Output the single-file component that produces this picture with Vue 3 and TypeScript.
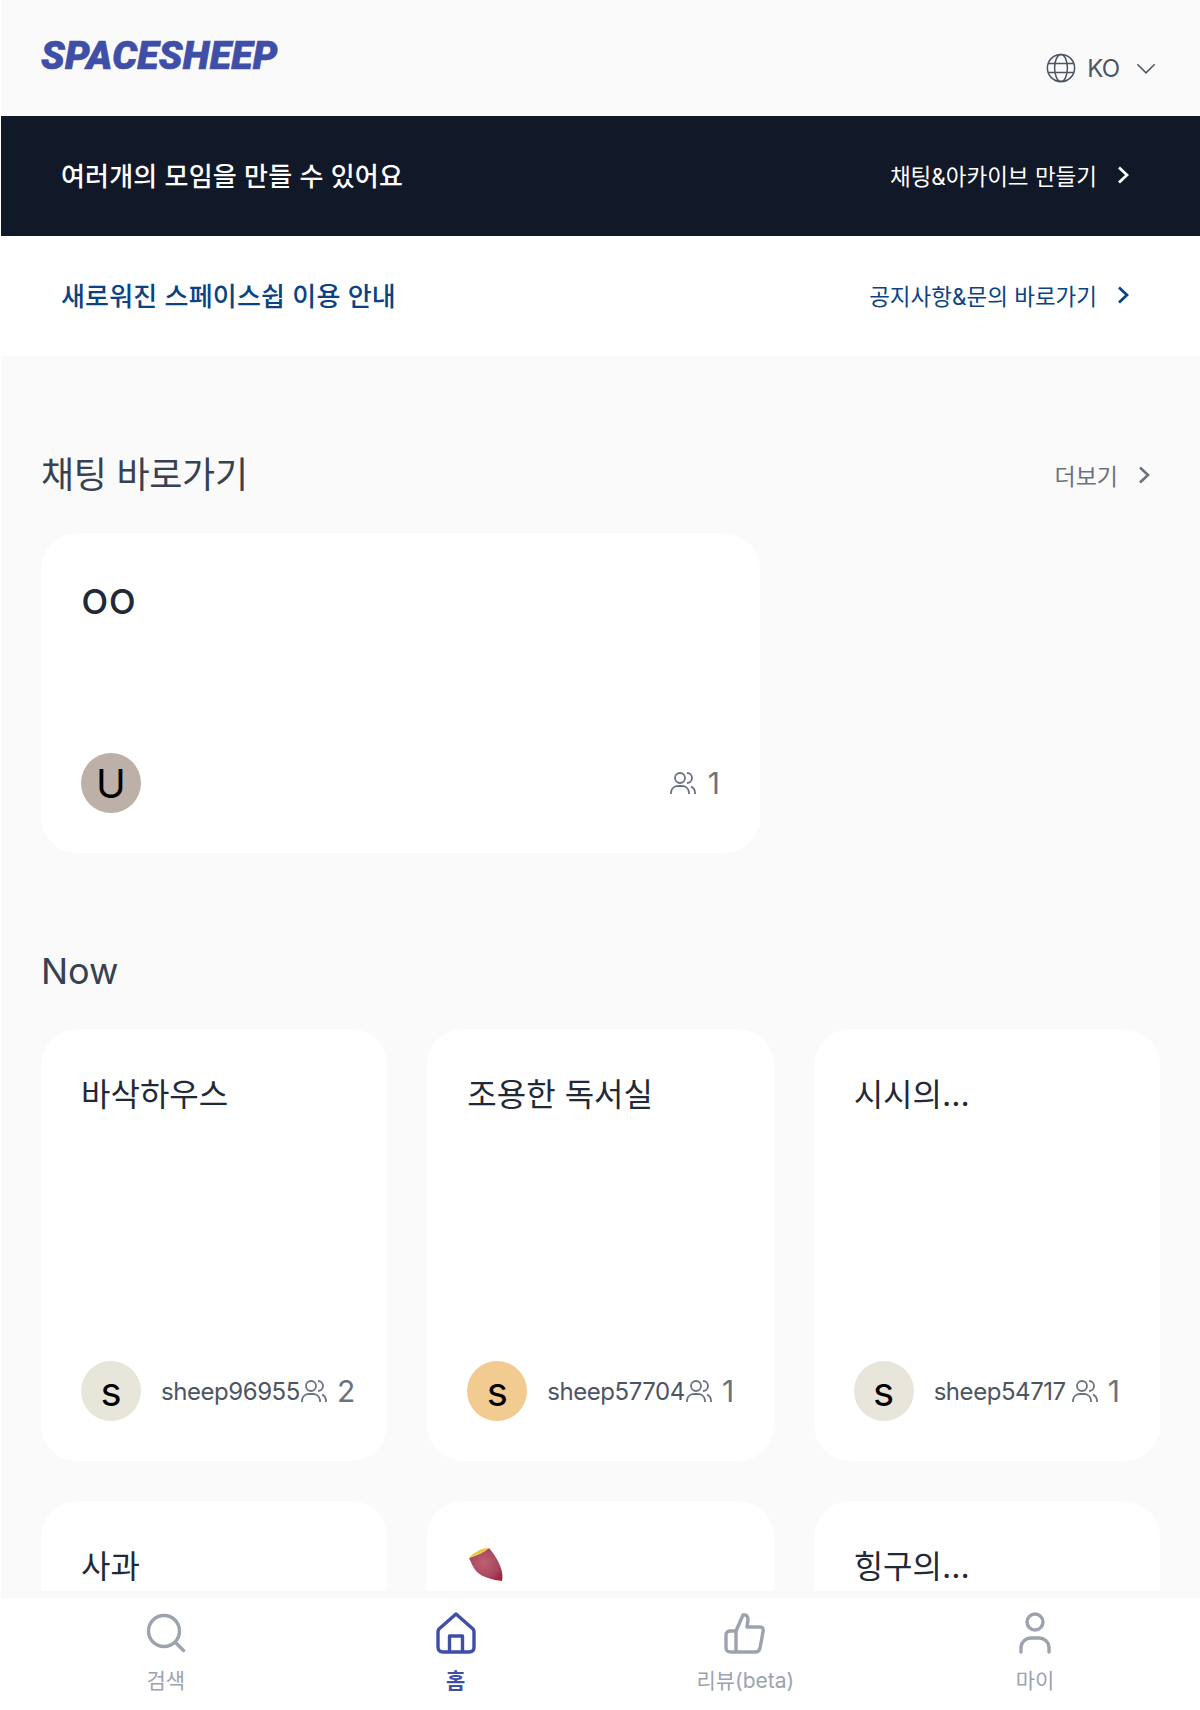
<template>
  <div class="page">
    <header class="top">
      <h1 class="logo">SPACESHEEP</h1>
      <div class="lang">
        <svg class="globe" viewBox="0 0 30 30" fill="none" stroke="#4b5563" stroke-width="1.5">
          <circle cx="15" cy="15" r="13.6" />
          <ellipse cx="15" cy="15" rx="6.4" ry="13.6" />
          <path d="M2.4 10.5h25.2M2.400 19.5h25.2" />
        </svg>
        <span class="lang-code">KO</span>
        <svg class="caret" viewBox="0 0 20 12" fill="none" stroke="#4b5563" stroke-width="1.4">
          <path d="M2 2l8 8 8-8" />
        </svg>
      </div>
    </header>

    <a class="banner dark">
      <span class="banner-title">여러개의 모임을 만들 수 있어요</span>
      <span class="banner-link">
        채팅&amp;아카이브 만들기
        <svg class="chev" viewBox="0 0 12 20" fill="none" stroke="currentColor" stroke-width="2.8">
          <path d="M2 2.500l8 7.500-8 7.500" />
        </svg>
      </span>
    </a>
    <a class="banner light">
      <span class="banner-title">새로워진 스페이스쉽 이용 안내</span>
      <span class="banner-link">
        공지사항&amp;문의 바로가기
        <svg class="chev" viewBox="0 0 12 20" fill="none" stroke="currentColor" stroke-width="2.8">
          <path d="M2 2.500l8 7.500-8 7.500" />
        </svg>
      </span>
    </a>

    <main class="content">
      <section>
        <div class="section-head">
          <h2>채팅 바로가기</h2>
          <a class="more">
            더보기
            <svg class="chev" viewBox="0 0 12 20" fill="none" stroke="currentColor" stroke-width="2.6">
              <path d="M2 2.500l8 7.500-8 7.500" />
            </svg>
          </a>
        </div>
        <div class="card wide">
          <h3 class="card-title big">oo</h3>
          <div class="card-foot">
            <span class="avatar" style="background: #bcb0a8">U</span>
            <span class="count">
              <svg class="people" viewBox="0 0 26 24" fill="none" stroke="#6b7280" stroke-width="1.8">
                <circle cx="10" cy="7" r="5" />
                <path d="M1 23v-2a7 7 0 0 1 7-6h4a7 7 0 0 1 7 6v2M17 2a5 5 0 0 1 0 10M21 15.500a7 7 0 0 1 4 5.500v2" />
              </svg>
              1
            </span>
          </div>
        </div>
      </section>

      <section class="now">
        <h2>Now</h2>
        <div class="grid">
          <div v-for="room in rooms" :key="room.title" class="card tall">
            <h3 class="card-title">
              <svg v-if="room.yam" class="yam" viewBox="0 0 36 36">
                <defs>
                  <radialGradient id="yamSkin" cx="0.45" cy="0.45" r="0.65">
                    <stop offset="0" stop-color="#bd6274" />
                    <stop offset="0.7" stop-color="#a8445c" />
                    <stop offset="1" stop-color="#a12440" />
                  </radialGradient>
                </defs>
                <path d="M0 11C2 15 4 21 8 25C13 30 24 33 33 34C35 26 31 14 20 1C14 6 6 9 0 11Z" fill="url(#yamSkin)" />
                <path d="M0 11C4 6 12 1 20 1C14 6 6 9 0 11Z" fill="#e9c93c" />
              </svg>
              <template v-else>{{ room.title }}</template>
            </h3>
            <div v-if="room.owner" class="card-foot">
              <span class="owner">
                <span class="avatar" :style="{ background: room.color }">s</span>
                <span class="name">{{ room.owner }}</span>
              </span>
              <span class="count">
                <svg class="people" viewBox="0 0 26 24" fill="none" stroke="#6b7280" stroke-width="1.8">
                  <circle cx="10" cy="7" r="5" />
                  <path d="M1 23v-2a7 7 0 0 1 7-6h4a7 7 0 0 1 7 6v2M17 2a5 5 0 0 1 0 10M21 15.500a7 7 0 0 1 4 5.500v2" />
                </svg>
                {{ room.members }}
              </span>
            </div>
          </div>
        </div>
      </section>
    </main>

    <nav class="tabbar">
      <a class="tab">
        <svg viewBox="0 0 44 44" fill="none" stroke="currentColor" stroke-width="3.4" stroke-linecap="round">
          <circle cx="20" cy="20" r="15.500" />
          <path d="M31.500 31.500l8 8" />
        </svg>
        <span>검색</span>
      </a>
      <a class="tab active">
        <svg viewBox="0 0 44 44" fill="none" stroke="currentColor" stroke-width="3.4" stroke-linejoin="round">
          <path d="M22 3L39 18Q40 19 40 21V36Q40 41 35 41H9Q4 41 4 36V21Q4 19 5 18Z" />
          <path d="M15.500 41V25H28.500V41" />
        </svg>
        <span>홈</span>
      </a>
      <a class="tab">
        <svg viewBox="0 0 44 44" fill="none" stroke="currentColor" stroke-width="3.4" stroke-linejoin="round" stroke-linecap="round">
          <path d="M13 20L20 4Q25 3 25 9L24 16H37Q41 16 40 21L37 37Q36 41 32 41H8Q3 41 3 37V24Q3 20 8 20H13V41" />
        </svg>
        <span>리뷰(beta)</span>
      </a>
      <a class="tab">
        <svg viewBox="0 0 44 44" fill="none" stroke="currentColor" stroke-width="3.4" stroke-linecap="round">
          <circle cx="22" cy="11" r="8" />
          <path d="M8 41v-5a10 10 0 0 1 10-9h8a10 10 0 0 1 10 9v5" />
        </svg>
        <span>마이</span>
      </a>
    </nav>
  </div>
</template>

<script setup lang="ts">
interface Room {
  title: string
  yam?: boolean
  owner?: string
  color?: string
  members?: number
}

const rooms: Room[] = [
  { title: '바삭하우스', owner: 'sheep96955', color: '#e8e6da', members: 2 },
  { title: '조용한 독서실', owner: 'sheep57704', color: '#f2cb91', members: 1 },
  { title: '시시의...', owner: 'sheep54717', color: '#e8e6da', members: 1 },
  { title: '사과' },
  { title: '고구마', yam: true },
  { title: '힝구의...' }
]
</script>

<style>
html,
body {
  margin: 0;
  background: #fff;
}
</style>

<style scoped>
.page {
  margin-left: 1px;
  height: 1710px;
  overflow: hidden;
  background: #fafafb;
  font-family: Inter, "Noto Sans CJK KR", sans-serif;
  color: #1f2937;
  position: relative;
}

.top {
  height: 116px;
  box-sizing: border-box;
  padding: 0 40px;
  display: flex;
  justify-content: space-between;
}

.logo {
  margin: 35px 0 0;
  font-family: Roboto, sans-serif;
  font-size: 39px;
  line-height: 42px;
  font-weight: 900;
  font-style: italic;
  letter-spacing: 0.3px;
  color: #3f4fa8;
  -webkit-text-stroke: 0.7px #3f4fa8;
}

.lang {
  margin-top: 52px;
  height: 32px;
  display: flex;
  align-items: center;
  font-size: 24px;
  color: #4b5563;
}

.lang-code {
  letter-spacing: -1px;
}

.globe {
  width: 30px;
  height: 30px;
  margin-right: 11px;
}

.caret {
  width: 22px;
  height: 13px;
  margin-left: 16px;
  margin-right: 3px;
}

.banner {
  height: 120px;
  box-sizing: border-box;
  padding: 0 71px 0 60px;
  display: flex;
  align-items: center;
  justify-content: space-between;
}

.banner.dark {
  background: #111827;
  color: #fff;
}

.banner.light {
  background: #fff;
  color: #0a4384;
}

.banner-title {
  font-size: 26px;
  font-weight: 500;
  letter-spacing: 0.2px;
  padding-bottom: 4px;
}

.banner-link {
  display: flex;
  align-items: center;
  font-size: 22.5px;
  gap: 20px;
  padding-bottom: 2px;
}

.chev {
  width: 12px;
  height: 20px;
}

.content {
  padding: 91px 40px 0;
}

h2 {
  margin: 0;
  font-size: 36px;
  line-height: 56px;
  font-weight: 400;
  color: #374151;
}

.section-head h2 {
  letter-spacing: -0.3px;
}

.section-head {
  display: flex;
  justify-content: space-between;
  align-items: center;
}

.more {
  display: flex;
  align-items: center;
  gap: 20px;
  font-size: 23px;
  color: #6b7280;
  padding-right: 10px;
}

.card {
  background: #fff;
  border-radius: 36px;
  padding: 40px;
  box-sizing: border-box;
  display: flex;
  flex-direction: column;
  justify-content: space-between;
}

.wide {
  width: 719px;
  height: 320px;
  margin-top: 30px;
}

.wide .count {
  gap: 12px;
}

.tall {
  height: 432px;
}

.card-title {
  margin: 0;
  font-size: 32px;
  line-height: 52px;
  font-weight: 400;
  color: #1f2937;
}

.card-title.big {
  font-size: 46px;
  line-height: 48px;
}

.yam {
  display: block;
  width: 36px;
  height: 36px;
  margin: 6px 0 0 2px;
}

.card-foot {
  display: flex;
  align-items: center;
  justify-content: space-between;
}

.owner {
  display: flex;
  align-items: center;
  margin-right: 1px;
}

.avatar {
  width: 60px;
  height: 60px;
  border-radius: 50%;
  display: flex;
  align-items: center;
  justify-content: center;
  font-size: 40px;
  color: #000;
  flex-shrink: 0;
}

.name {
  margin-left: 20px;
  font-size: 24px;
  letter-spacing: -0.45px;
  color: #4b5563;
}

.count {
  display: flex;
  align-items: center;
  flex-shrink: 0;
  font-size: 30px;
  line-height: 36px;
  color: #6b7280;
  gap: 10px;
}

.people {
  width: 26px;
  height: 24px;
}

.now {
  margin-top: 90px;
}

.grid {
  margin-top: 30px;
  display: grid;
  grid-template-columns: repeat(3, minmax(0, 1fr));
  gap: 40px;
}

.tabbar {
  position: absolute;
  left: 0;
  right: 0;
  bottom: 0;
  height: 112px;
  box-sizing: border-box;
  padding: 13px 20px 0;
  background: #fff;
  box-shadow: 0 -7px 0 #f8f9f9;
  display: grid;
  grid-template-columns: repeat(4, 1fr);
}

.tab {
  display: flex;
  flex-direction: column;
  align-items: center;
  color: #9ca3af;
  font-size: 21px;
  line-height: 32px;
}

.tab svg {
  width: 44px;
  height: 44px;
  margin-bottom: 10px;
}

.tab.active {
  color: #3f4fa8;
  font-weight: 600;
}
</style>
